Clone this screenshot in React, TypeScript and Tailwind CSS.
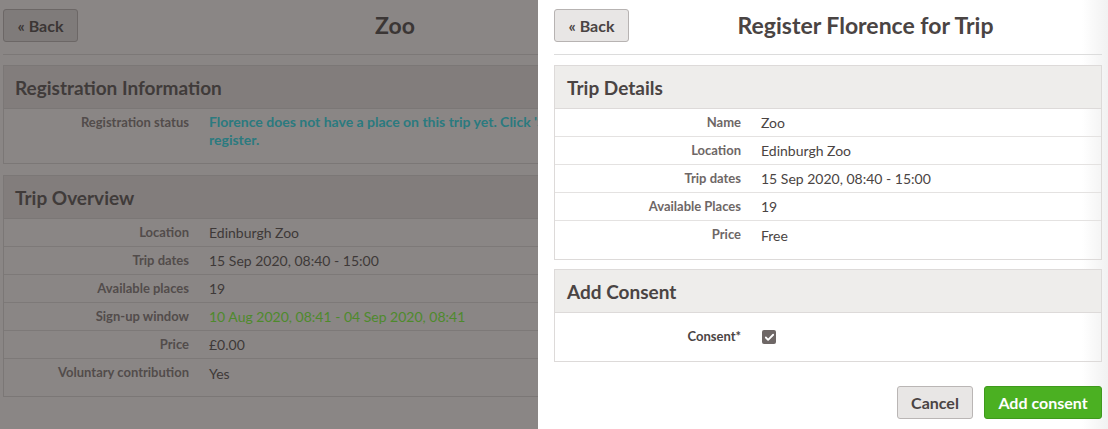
import { Check } from "lucide-react";

const FONT = "font-['Lato','Noto_Sans',sans-serif]";

type Row = { label: string; value: string; tone?: string };

const overviewRows: Row[] = [
  { label: "Location", value: "Edinburgh Zoo" },
  { label: "Trip dates", value: "15 Sep 2020, 08:40 - 15:00" },
  { label: "Available places", value: "19" },
  { label: "Sign-up window", value: "10 Aug 2020, 08:41 - 04 Sep 2020, 08:41", tone: "text-[#4e8a2c]" },
  { label: "Price", value: "£0.00" },
  { label: "Voluntary contribution", value: "Yes" },
];

const detailRows: Row[] = [
  { label: "Name", value: "Zoo" },
  { label: "Location", value: "Edinburgh Zoo" },
  { label: "Trip dates", value: "15 Sep 2020, 08:40 - 15:00" },
  { label: "Available Places", value: "19" },
  { label: "Price", value: "Free" },
];

// dimmed page behind the drawer
function BackgroundPage() {
  return (
    <div className="w-[538px] shrink-0 overflow-hidden bg-[#8a8685]">
      <div className="w-[712px] pl-[3px] pt-[9px]">
        <div className="flex items-center border-b border-[#7c7877] pb-[12px]">
          <button className="h-[33px] w-[75px] rounded-[3px] border border-[#6c6766] bg-[#7f7b7a] text-[16px] font-bold text-[#3b3635]">
            « Back
          </button>
          <h1 className="flex-1 text-center text-[23px] leading-[33px] font-bold text-[#3b3635]">Zoo</h1>
        </div>

        <section className="mt-[10px] border border-[#7b7776]">
          <h2 className="h-[43px] border-b border-[#7b7776] bg-[#827d7c] px-[11px] text-[19px] leading-[43px] font-bold text-[#403b3a]">
            Registration Information
          </h2>
          <div className="flex pt-[4px] pb-[14px] text-[14px] leading-[18px]">
            <div className="w-[185px] shrink-0 text-right text-[13px] font-bold text-[#524c4b]">
              Registration status
            </div>
            <div className="w-[420px] pl-[20px] font-bold text-[#2b7a7f]">
              Florence does not have a place on this trip yet. Click 'Sign up' to register.
            </div>
          </div>
        </section>

        <section className="mt-[11px] border border-[#7b7776] pb-[9px]">
          <h2 className="h-[43px] border-b border-[#7b7776] bg-[#827d7c] px-[11px] text-[19px] leading-[43px] font-bold text-[#403b3a]">
            Trip Overview
          </h2>
          {overviewRows.map((r, i) => (
            <div
              key={r.label}
              className={`flex h-[28px] items-center text-[14px] ${i < overviewRows.length - 1 ? "border-b border-[#7d7978]" : ""}`}
            >
              <div className="w-[185px] shrink-0 text-right text-[13px] font-bold text-[#524c4b]">{r.label}</div>
              <div className={`pl-[20px] ${r.tone ?? "text-[#3e3938]"}`}>{r.value}</div>
            </div>
          ))}
        </section>
      </div>
    </div>
  );
}

function Panel({ title, children, className = "" }: { title: string; children: React.ReactNode; className?: string }) {
  return (
    <section className={`border border-[#dddad9] ${className}`}>
      <h2 className="h-[43px] border-b border-[#dddad9] bg-[#eeedeb] px-[12px] text-[19px] leading-[43px] font-bold text-[#4a4443]">
        {title}
      </h2>
      {children}
    </section>
  );
}

export default function App() {
  return (
    <div className={`flex h-[429px] w-[1108px] overflow-hidden ${FONT}`}>
      <BackgroundPage />

      <div className="flex-1 bg-[linear-gradient(to_right,#ffffff_calc(100%-26px),#f1f1f1)] pl-[16px] pr-[6px] pt-[9px]">
        <div className="flex items-center border-b border-[#dcdcdc] pb-[12px]">
          <button className="h-[33px] w-[75px] rounded-[3px] border border-[#b7b3b2] bg-[#e8e6e5] text-[16px] font-bold text-[#4a4443]">
            « Back
          </button>
          <h1 className="flex-1 text-center text-[23px] leading-[33px] font-bold text-[#4a4443]">Register Florence for Trip</h1>
        </div>

        <Panel title="Trip Details" className="mt-[10px] pb-[10px]">
          {detailRows.map((r, i) => (
            <div
              key={r.label}
              className={`flex h-[28px] items-center text-[14px] ${i < detailRows.length - 1 ? "border-b border-[#e4e2e1]" : ""}`}
            >
              <div className="w-[186px] shrink-0 text-right text-[13px] font-bold text-[#6e6766]">{r.label}</div>
              <div className="pl-[20px] text-[#4a4443]">{r.value}</div>
            </div>
          ))}
        </Panel>

        <Panel title="Add Consent" className="mt-[9px]">
          <div className="flex h-[48px] items-center">
            <div className="w-[186px] shrink-0 text-right text-[13px] font-bold text-[#4a4443]">Consent*</div>
            <div className="pl-[21px]">
              <span className="flex h-[14px] w-[14px] items-center justify-center rounded-[2px] bg-[#6e6766]">
                <Check className="h-[11px] w-[11px] text-white" strokeWidth={4} />
              </span>
            </div>
          </div>
        </Panel>

        <div className="mt-[24px] flex justify-end gap-[11px]">
          <button className="h-[33px] w-[76px] rounded-[3px] border border-[#bab6b5] bg-[#e8e6e5] text-[16px] font-bold text-[#4a4443]">
            Cancel
          </button>
          <button className="h-[33px] w-[118px] rounded-[3px] border border-[#3f9a1c] bg-[#4bb022] text-[16px] font-bold text-white">
            Add consent
          </button>
        </div>
      </div>
    </div>
  );
}
